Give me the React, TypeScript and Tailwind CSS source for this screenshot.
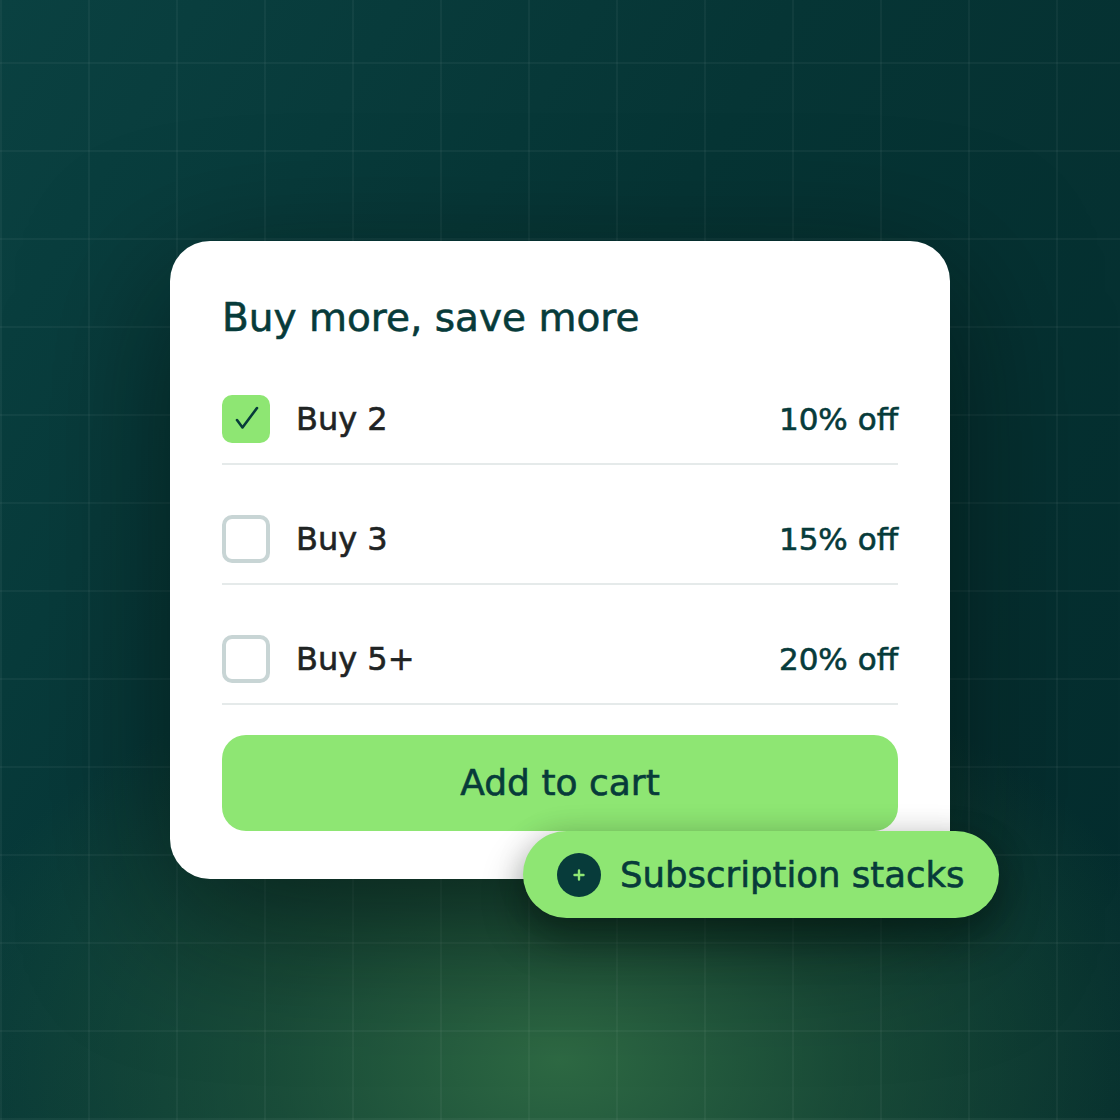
import React from "react";

type Tier = { label: string; discount: string; checked: boolean };

const tiers: Tier[] = [
  { label: "Buy 2", discount: "10% off", checked: true },
  { label: "Buy 3", discount: "15% off", checked: false },
  { label: "Buy 5+", discount: "20% off", checked: false },
];

function Checkbox({ checked }: { checked: boolean }) {
  if (checked) {
    return (
      <span className="flex h-12 w-12 shrink-0 items-center justify-center rounded-[10px] bg-[#8ee673]">
        <svg viewBox="0 0 48 48" className="h-12 w-12" fill="none">
          <path d="M15 25 L20.5 32.5 L35 13" stroke="#073b3a" strokeWidth="2.6" strokeLinecap="round" strokeLinejoin="round" />
        </svg>
      </span>
    );
  }
  return <span className="block h-12 w-12 shrink-0 rounded-[10px] border-4 border-[#c8d5d5] bg-white" />;
}

export default function App() {
  return (
    <div
      className="flex h-[1120px] w-[1120px] items-center justify-center font-['DejaVu_Sans',sans-serif] [-webkit-text-stroke:0.6px_currentColor] bg-[linear-gradient(to_right,rgba(255,255,255,0.04)_0_2px,transparent_2px),linear-gradient(to_bottom,rgba(255,255,255,0.04)_0_2px,transparent_2px),radial-gradient(ellipse_640px_420px_at_560px_1060px,rgba(48,108,68,0.95),rgba(38,92,60,0.6)_45%,transparent_100%),linear-gradient(120deg,#0a4141_0%,#063535_45%,#042c2d_100%)] [background-size:88px_88px,88px_88px,100%_100%,100%_100%] [background-position:0_0,0_62px,0_0,0_0]"
    >
      <div className="relative w-[780px] rounded-[40px] bg-white px-[52px] pt-[58px] pb-[48px] shadow-[0_40px_140px_rgba(0,10,8,0.55)]">
        <h1 className="mb-[8px] text-[39px] leading-[38px] text-[#073b3a]">Buy more, save more</h1>

        {tiers.map((t) => (
          <div key={t.label} className="flex items-center justify-between border-b-2 border-[#e5eaea] pt-[50px] pb-[20px]">
            <div className="flex items-center gap-[26px]">
              <Checkbox checked={t.checked} />
              <span className="text-[32px] leading-none text-[#1f2424]">{t.label}</span>
            </div>
            <span className="text-[31px] leading-none text-[#073b3a]">{t.discount}</span>
          </div>
        ))}

        <button className="mt-[30px] flex h-[96px] w-full items-center justify-center rounded-[24px] bg-[#8ee673] text-[36px] text-[#073b3a]">
          Add to cart
        </button>

        {/* floating feature pill */}
        <div className="absolute left-[353px] top-[590px] flex h-[87px] items-center gap-[19px] rounded-full bg-[#8ee673] pl-[34px] pr-[34px] shadow-[0_0_30px_rgba(0,0,0,0.12),0_22px_40px_rgba(0,15,10,0.45)]">
          <span className="flex h-[44px] w-[44px] items-center justify-center rounded-full bg-[#073b3a]">
            <svg viewBox="0 0 16 16" className="h-4 w-4" fill="none">
              <path d="M8 3.5 V12.5 M3.5 8 H12.5" stroke="#8ee673" strokeWidth="2.4" strokeLinecap="round" />
            </svg>
          </span>
          <span className="whitespace-nowrap text-[35.5px] leading-none text-[#073b3a]">Subscription stacks</span>
        </div>
      </div>
    </div>
  );
}
